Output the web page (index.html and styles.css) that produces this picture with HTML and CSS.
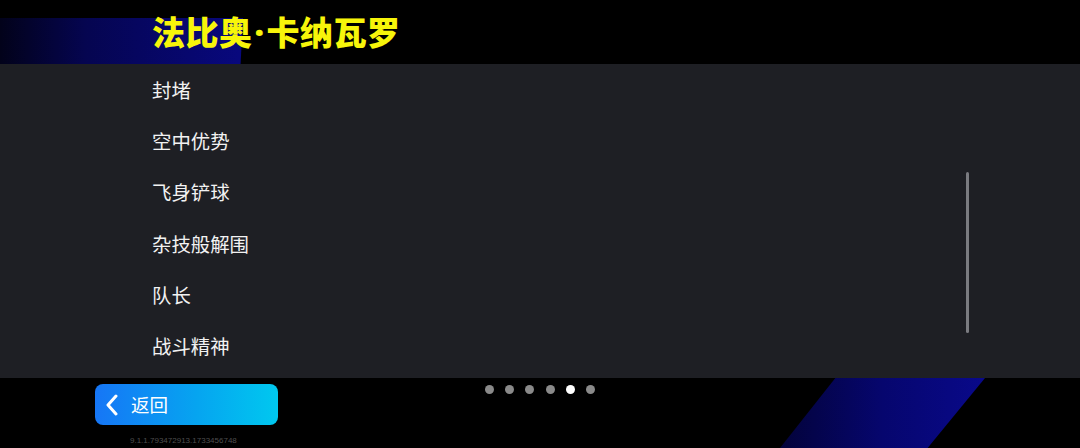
FILE: index.html
```html
<!DOCTYPE html>
<html lang="zh">
<head>
<meta charset="utf-8">
<link rel="stylesheet" href="styles.css">
</head>
<body>
<div class="deco deco-top"></div>
<div class="deco deco-bottom"></div>
<header class="header">
  <h1 class="title">法比奥<span class="sep">·</span>卡纳瓦罗</h1>
</header>
<main class="panel">
  <ul class="list">
    <li class="item">封堵</li>
    <li class="item">空中优势</li>
    <li class="item">飞身铲球</li>
    <li class="item">杂技般解围</li>
    <li class="item">队长</li>
    <li class="item">战斗精神</li>
  </ul>
  <div class="scrollbar"></div>
</main>
<footer class="footer">
  <div class="back-col">
    <button class="back">
      <svg class="chev" width="16" height="22" viewBox="0 0 16 22"><polyline points="12,2 4,11 12,20" fill="none" stroke="#fff" stroke-width="3" stroke-linecap="round" stroke-linejoin="round"/></svg>
      <span class="back-label">返回</span>
    </button>
    <div class="version">9.1.1.793472913.1733456748</div>
  </div>
  <div class="dots">
    <span class="dot"></span>
    <span class="dot"></span>
    <span class="dot"></span>
    <span class="dot"></span>
    <span class="dot active"></span>
    <span class="dot"></span>
  </div>
</footer>
</body>
</html>
```
FILE: styles.css
```css
* { box-sizing: border-box; }
html, body { margin: 0; padding: 0; }
body {
  width: 1080px;
  height: 448px;
  overflow: hidden;
  background: #000;
  position: relative;
  font-family: "Noto Sans CJK SC", "Noto Sans", sans-serif;
  color: #fff;
}
.deco { position: absolute; z-index: 0; }
.deco-top {
  left: 0; top: 18px; width: 243px; height: 46px;
  background: linear-gradient(90deg, #02021a 0%, #050550 35%, #08087e 100%);
  clip-path: polygon(0 0, 100% 0, 99% 100%, 0 100%);
}
.deco-bottom {
  left: 780px; top: 378px; width: 205px; height: 70px;
  background: linear-gradient(90deg, #03033a 0%, #06066e 50%, #09098a 100%);
  clip-path: polygon(27% 0, 100% 0, 72% 100%, 0 100%);
}
.header {
  position: relative; z-index: 1;
  height: 64px;
  padding-left: 152px;
  display: flex;
  align-items: center;
}
.title {
  margin: 0;
  margin-top: -1px;
  font-size: 33px;
  font-weight: 900;
  color: #f7f50a;
  line-height: 40px;
  letter-spacing: 0.5px;
}
.sep {
  font-family: "Noto Sans", "Liberation Sans", sans-serif;
  font-weight: 900;
  margin: 0 2px;
}
.panel {
  position: relative; z-index: 1;
  height: 314px;
  background: #1e1f24;
}
.list {
  list-style: none;
  margin: 0;
  padding: 0 0 0 152px;
}
.item {
  height: 51.2px;
  display: flex;
  align-items: center;
  font-size: 19.4px;
  color: #f2f2f2;
}
.scrollbar {
  position: absolute;
  left: 966px; top: 108px;
  width: 3px; height: 161px;
  background: #7a7b80;
  border-radius: 2px;
}
.footer {
  position: relative; z-index: 1;
  height: 70px;
  display: flex;
  align-items: flex-start;
  padding-left: 95px;
}
.back-col {
  display: flex;
  flex-direction: column;
  padding-top: 6px;
}
.back {
  width: 183px; height: 41px;
  border: 0;
  border-radius: 8px;
  background: linear-gradient(90deg, #1676f6 0%, #06a4f0 55%, #00c8ef 100%);
  display: flex;
  align-items: center;
  padding: 0 0 0 9px;
  gap: 11px;
  color: #fff;
  font-family: inherit;
}
.chev { display: block; }
.back-label { font-size: 18.5px; line-height: 1; color: #fff; }
.version {
  margin-top: 11px;
  margin-left: 35px;
  font-family: "Liberation Sans", sans-serif;
  font-size: 8px;
  line-height: 9px;
  color: #4e4e4e;
}
.dots {
  display: flex;
  gap: 11.2px;
  margin-left: 207px;
  padding-top: 6.5px;
}
.dot {
  width: 9px; height: 9px;
  border-radius: 50%;
  background: #8a8a8a;
}
.dot.active { background: #fff; }
```
